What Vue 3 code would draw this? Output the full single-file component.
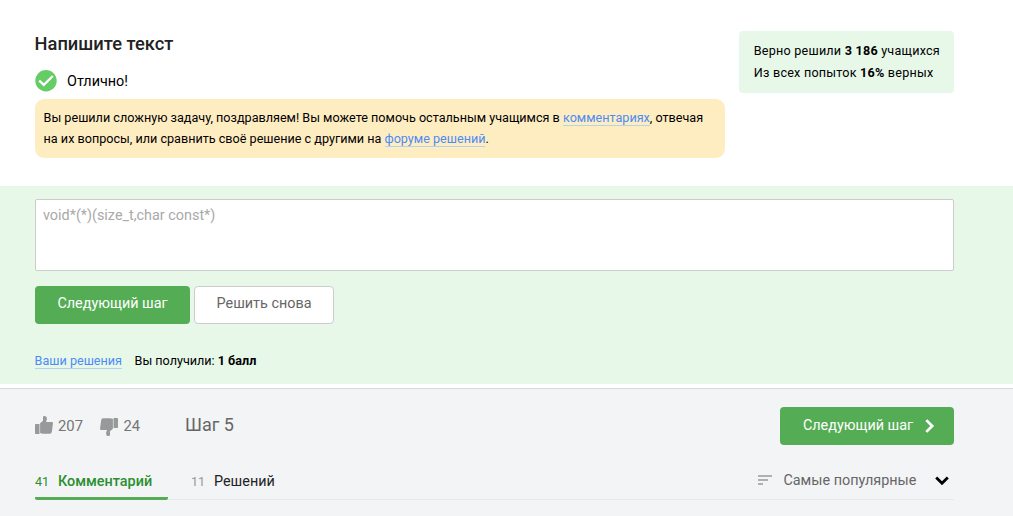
<script setup>
const reactions = [
  { name: 'like', count: 207 },
  { name: 'dislike', count: 24 },
]
const tabs = [
  { count: 41, label: 'Комментарий', active: true },
  { count: 11, label: 'Решений', active: false },
]
</script>

<template>
  <main class="page">
    <header class="intro">
      <div class="task">
        <h1>Напишите текст</h1>
        <div class="status">
          <svg width="22" height="22" viewBox="0 0 22 22">
            <circle cx="11" cy="10.7" r="10.7" fill="#66cc66" />
            <path d="M4.2 10.6 8.8 14.9 17.8 6" fill="none" stroke="#fff" stroke-width="2.3" />
          </svg>
          <span>Отлично!</span>
        </div>
        <p class="message">
          <span class="line">Вы решили сложную задачу, поздравляем! Вы можете помочь остальным учащимся в <a>комментариях</a>, отвечая</span>
          <span class="line">на их вопросы, или сравнить своё решение с другими на <a>форуме решений</a>.</span>
        </p>
      </div>
      <aside class="stats">
        <div>Верно решили <b>3 186</b> учащихся</div>
        <div>Из всех попыток <b>16%</b> верных</div>
      </aside>
    </header>

    <section class="attempt">
      <div class="answer">void*(*)(size_t,char const*)</div>
      <div class="actions">
        <button class="btn primary">Следующий шаг</button>
        <button class="btn plain">Решить снова</button>
      </div>
      <div class="result">
        <a>Ваши решения</a>
        <span>Вы получили: <b>1 балл</b></span>
      </div>
    </section>

    <footer class="bottom">
      <div class="toolbar">
        <div v-for="r in reactions" :key="r.name" class="reaction" :class="r.name">
          <svg width="18" height="18" viewBox="0 0 18 18">
            <path fill="#999" d="M.7 8H4.5V18H.7Q0 18 0 17.3V8.7Q0 8 .7 8ZM5.1 7.2 8 4.8V1Q8 0 9.3 0 11.9 0 11.9 2.6 11.9 4.4 11 6H17Q18 6 18 7.2L16.8 16Q16.5 17.8 15 17.8H8Q6.6 17.8 5.1 17Z" />
          </svg>
          <span>{{ r.count }}</span>
        </div>
        <div class="step">Шаг 5</div>
        <button class="btn primary next">
          <span>Следующий шаг</span>
          <svg width="10" height="14" viewBox="0 0 10 14"><path d="M1.3 1.1 7.2 7 1.3 12.9" fill="none" stroke="#fff" stroke-width="2.7" /></svg>
        </button>
      </div>
      <nav class="tabs">
        <div v-for="t in tabs" :key="t.label" class="tab" :class="{ active: t.active }">
          <span class="count">{{ t.count }}</span><span class="label">{{ t.label }}</span>
        </div>
        <div class="sort">
          <svg class="lines" width="14" height="11" viewBox="0 0 14 11"><path d="M0 1H14M0 5H10M0 9H5" stroke="#999" stroke-width="1.3" /></svg>
          <span>Самые популярные</span>
          <svg class="chevron" width="14" height="10" viewBox="0 0 14 10"><path d="M1.2 1.5 7 7.3 12.8 1.5" fill="none" stroke="#000" stroke-width="2.8" /></svg>
        </div>
      </nav>
    </footer>
  </main>
</template>

<style>
body { margin: 0; background: #fff; }
</style>

<style scoped>
.page {
  box-sizing: border-box;
  height: 516px;
  overflow: hidden;
  display: flex;
  flex-direction: column;
  font-family: Roboto, "Liberation Sans", sans-serif;
  font-size: 14.4px;
  color: #000;
  white-space: nowrap;
}
.intro {
  box-sizing: border-box;
  height: 186px;
  padding: 31px 59px 0 34.6px;
  display: flex;
  justify-content: space-between;
  align-items: flex-start;
}
.task { width: 690px; }
h1 { margin: 0; font-size: 18.3px; line-height: 26px; font-weight: 500; color: #222; }
.status { display: flex; align-items: center; height: 22px; margin-top: 13px; gap: 10.5px; }
.message {
  box-sizing: border-box;
  height: 59px;
  margin: 7px 0 0;
  padding: 8px 9px;
  border-radius: 9px;
  background: #ffedc2;
  font-size: 12.61px;
}
.line { display: block; line-height: 21px; }
a { color: #4c8bf5; line-height: 14px; border-bottom: 1px solid #b4d2ee; }
.stats {
  box-sizing: border-box;
  width: 215px;
  height: 62px;
  padding: 9px 14.8px;
  border-radius: 4px;
  background: #e7f8e9;
  font-size: 12.6px;
  letter-spacing: 0.22px;
  line-height: 22px;
}
.attempt {
  box-sizing: border-box;
  height: 198px;
  padding: 13px 59px 0 35px;
  background: #e7f8e9;
}
.answer {
  box-sizing: border-box;
  height: 72px;
  padding: 5px 7px;
  border: 1px solid #ccc;
  border-radius: 2px;
  background: #fff;
  color: #a9a9a9;
  line-height: 21px;
}
.actions { display: flex; gap: 4px; margin-top: 15px; }
.btn {
  box-sizing: border-box;
  height: 38px;
  padding: 0 0 4px;
  border: 0;
  border-radius: 4px;
  font: 14.4px Roboto, "Liberation Sans", sans-serif;
  display: flex;
  align-items: center;
  justify-content: center;
}
.primary { width: 155px; background: #54ad54; color: #fff; }
.plain { width: 140px; background: #fff; color: #666; border: 1px solid #ccc; }
.result { display: flex; align-items: baseline; gap: 12.6px; margin: 29px 0 0 -0.4px; height: 16px; font-size: 12.6px; }
.bottom {
  box-sizing: border-box;
  height: 128px;
  margin-top: 4px;
  padding: 18px 59px 0 35px;
  border-top: 1px solid #d8dadc;
  background: #f3f4f6;
}
.toolbar { display: flex; height: 38px; align-items: center; color: #757575; }
.reaction { display: flex; align-items: center; gap: 5px; width: 65px; }
.reaction span { font-size: 14.8px; }
.like svg { transform: translateY(-1px); }
.dislike { width: 85px; gap: 5.5px; }
.dislike svg { transform: translateY(1px) rotate(180deg); }
.step { font-size: 18px; color: #666; padding-bottom: 3px; }
.next { width: 174px; margin-left: auto; gap: 12px; padding: 0 0 2px 4px; }
.next svg { margin-top: 2px; }
.tabs {
  box-sizing: border-box;
  height: 43px;
  margin-top: 12px;
  display: flex;
  box-shadow: inset 0 -1px #e6e8ea;
}
.tab {
  box-sizing: border-box;
  height: 43px;
  line-height: 50px;
  margin-right: 23px;
  display: flex;
  color: #222;
}
.count { width: 23px; font-size: 12.6px; color: #999; }
.active { width: 133px; background: linear-gradient(#54ad54, #54ad54) 0 100% / 100% 3px no-repeat; border-radius: 2px; }
.active .count, .active .label { color: #2a8f2f; }
.active .label { font-weight: 500; }
.sort { display: flex; align-items: center; margin-left: auto; height: 46px; color: #666; }
.lines { margin-right: 11.4px; }
.chevron { margin: 2px 5px 0 18.6px; }
</style>
